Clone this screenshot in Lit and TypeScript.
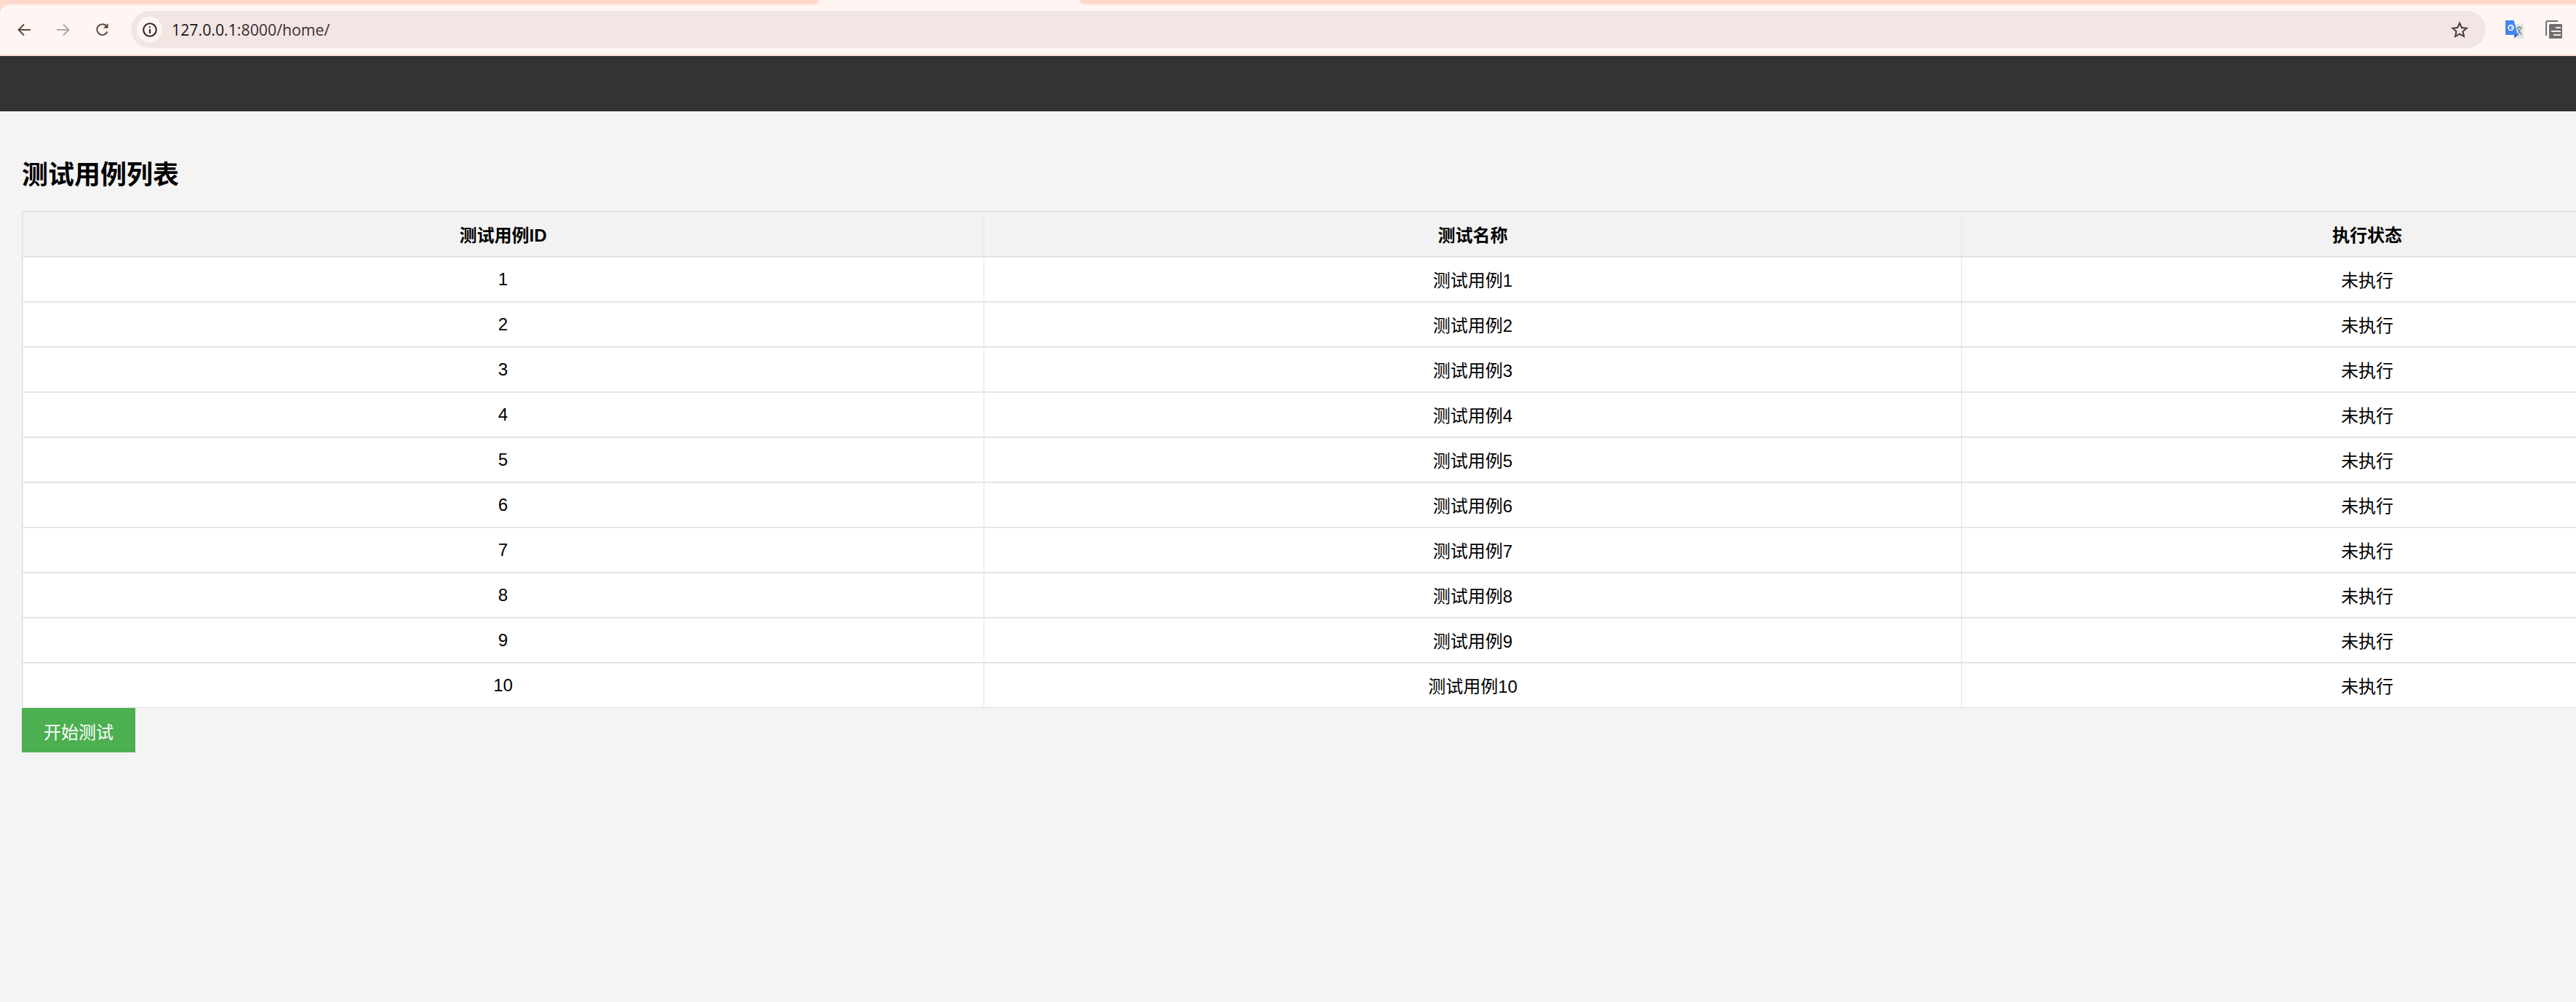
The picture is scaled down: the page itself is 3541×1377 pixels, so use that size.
import { LitElement, html, css } from "lit";
import { customElement } from "lit/decorators.js";

@customElement("app-root")
export class AppRoot extends LitElement {
  static styles = css`
    :host {
      display: block;
      width: 3541px;
      height: 1377px;
      overflow: hidden;
      background: #f4f4f4;
      font-family: "Liberation Sans", "Noto Sans CJK SC", sans-serif;
      color: #000;
    }
    .chrome { background: #ffd9cc; }
    .tabstrip {
      height: 6px;
      background: #fff6f3;
      display: flex;
      justify-content: space-between;
    }
    .strip-left {
      width: 1126px;
      background: #ffd9cc;
      border-radius: 0 0 7px 0;
    }
    .strip-right {
      width: 2057px;
      background: #ffd9cc;
      border-radius: 0 0 0 7px;
    }
    .toolbar {
      height: 69px;
      background: #fff6f3;
      border-radius: 14px 0 0 0;
      display: flex;
      align-items: center;
      box-sizing: border-box;
      padding: 0 19px 0 24px;
    }
    .nav {
      display: flex;
      gap: 36px;
      margin-right: 30px;
    }
    .nav svg { display: block; }
    .omnibox {
      flex: 1;
      height: 51px;
      background: #f2e6e5;
      border-radius: 26px;
      display: flex;
      align-items: center;
      box-sizing: border-box;
      padding: 0 24px 0 8px;
    }
    .chip {
      width: 35px;
      height: 35px;
      border-radius: 50%;
      background: #fff6f3;
      display: flex;
      align-items: center;
      justify-content: center;
      margin-right: 13px;
    }
    .url {
      flex: 1;
      font-family: "Open Sans", sans-serif;
      font-size: 21.3px;
      color: #3f2d2b;
    }
    .url b { font-weight: 400; color: #1f1514; }
    .ext {
      display: flex;
      align-items: center;
      gap: 30px;
      margin-left: 27px;
    }
    .ext svg { display: block; }
    .peach { height: 2px; background: #ffe0d6; }
    .topbar { height: 76px; background: #333; }
    main { padding: 0 0 0 30px; }
    h2 {
      margin: 0;
      padding-top: 63px;
      height: 74px;
      font-size: 36px;
      line-height: 50px;
      font-weight: 700;
    }
    table {
      width: 3781px;
      table-layout: fixed;
      border-collapse: collapse;
      background: #fff;
      font-size: 24px;
    }
    .c1 { width: 1322px; }
    .c2 { width: 1344px; }
    .c3 { width: 1115px; }
    th, td {
      border-style: solid;
      border-width: 1px;
      border-color: #ddd #e3e3e3;
      padding: 18px 16px 14px;
      line-height: 29px;
      height: 61px;
      box-sizing: border-box;
      text-align: center;
      font-size: 24px;
      box-shadow: inset 0 1px 0 #eee;
    }
    td.num { padding: 16px; }
    th:first-child, td:first-child {
      border-left-color: #ddd;
      box-shadow: inset 1px 1px 0 #eee;
    }
    th { background: #f2f2f2; font-weight: 700; }
    button {
      display: block;
      border: 0;
      margin: 0;
      width: 156px;
      height: 61px;
      background: #4caf50;
      color: #fff;
      font: inherit;
      font-size: 24px;
      padding: 2px 0 0;
    }
  `;

  private rows = Array.from({ length: 10 }, (_, i) => i + 1);

  render() {
    return html`
      <div class="chrome">
        <div class="tabstrip">
          <div class="strip-left"></div>
          <div class="strip-right"></div>
        </div>
        <div class="toolbar">
          <div class="nav">
            <svg width="18" height="18" viewBox="0 0 18 18" fill="none" stroke="#5d4642" stroke-width="2"><path d="M18 9H2M9 1.5 1.5 9 9 16.5"/></svg>
            <svg width="18" height="18" viewBox="0 0 18 18" fill="none" stroke="#b3a5a2" stroke-width="2"><path d="M0 9h16M9 1.5 16.5 9 9 16.5"/></svg>
            <svg width="18" height="18" viewBox="0 0 18 18" fill="none" stroke="#5d4642" stroke-width="2"><path d="M15.6 11.5A7.4 7.4 0 1 1 14.6 4"/><path d="M16.6 0v6.8H9.8" fill="#5d4642" stroke="none"/></svg>
          </div>
          <div class="omnibox">
            <div class="chip">
              <svg width="20" height="20" viewBox="0 0 20 20" fill="none" stroke="#2a1f1d" stroke-width="2"><circle cx="10" cy="10" r="8.8"/><path d="M10 9v6M10 5.2v1.8"/></svg>
            </div>
            <div class="url"><b>127.0.0.1</b>:8000/home/</div>
            <svg width="24" height="24" viewBox="0 0 24 24" fill="none" stroke="#4a3a38" stroke-width="2"><path d="M12 2.6l2.8 6.4 6.9.7-5.2 4.6 1.5 6.8-6-3.5-6 3.5 1.5-6.8-5.2-4.6 6.9-.7z"/></svg>
          </div>
          <div class="ext">
            <svg width="25" height="25" viewBox="0 0 25 25">
              <path d="M11 5h13a1 1 0 0 1 1 1v18a1 1 0 0 1-1 1H14z" fill="#e3e5e4"/>
              <path d="M15 10h8M19 8v2M16.500 21 21 11M16.500 11 22 20" fill="none" stroke="#7d9199" stroke-width="1.500"/>
              <path d="M1 0h10.500L17 20H1a1 1 0 0 1-1-1V1a1 1 0 0 1 1-1z" fill="#4285f4"/>
              <path d="M17 20l-5 4.500L12.500 20z" fill="#3748c0"/>
              <circle cx="7.500" cy="10" r="3.400" fill="none" stroke="#fff" stroke-width="1.600"/>
              <path d="M7.500 10h3.500" stroke="#fff" stroke-width="1.400"/>
            </svg>
            <svg width="23" height="25" viewBox="0 0 23 25">
              <path d="M1 21V3a2 2 0 0 1 2-2h14" fill="none" stroke="#6f6f6f" stroke-width="2"/>
              <rect x="5" y="5" width="18" height="20" rx="1.500" fill="#6f6f6f"/>
              <path d="M14 10h7M8 15h13M11 20h10" stroke="#f3ece9" stroke-width="2.200"/>
            </svg>
          </div>
        </div>
        <div class="peach"></div>
      </div>
      <div class="topbar"></div>
      <main>
        <h2>测试用例列表</h2>
        <table>
          <colgroup>
            <col class="c1" />
            <col class="c2" />
            <col class="c3" />
          </colgroup>
          <thead>
            <tr><th>测试用例ID</th><th>测试名称</th><th>执行状态</th></tr>
          </thead>
          <tbody>
            ${this.rows.map(
              (n) => html`<tr><td class="num">${n}</td><td>测试用例${n}</td><td>未执行</td></tr>`
            )}
          </tbody>
        </table>
        <button>开始测试</button>
      </main>
    `;
  }
}
